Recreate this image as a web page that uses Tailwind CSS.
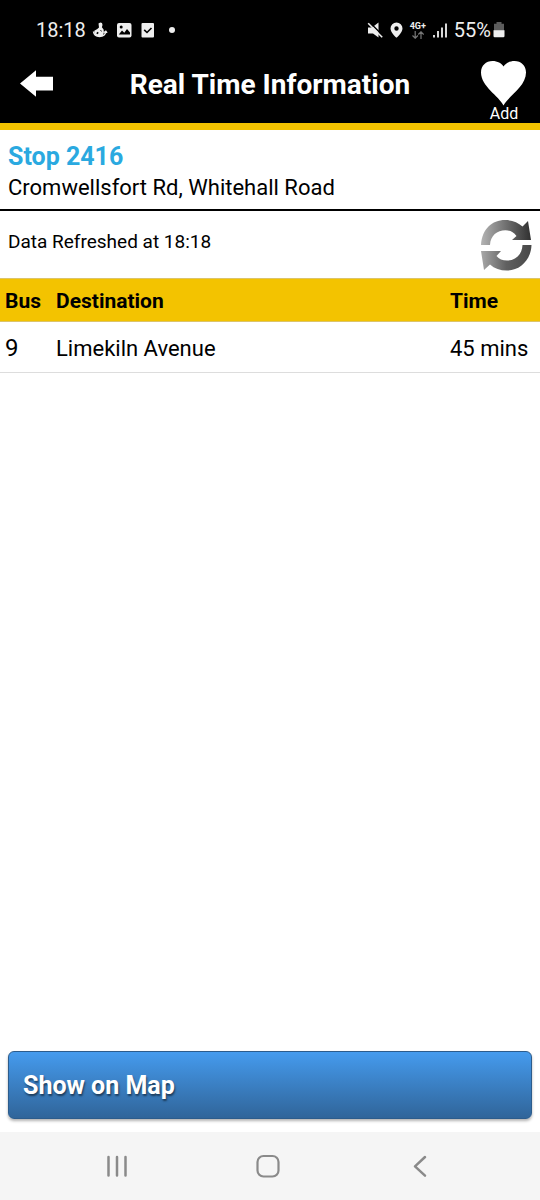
<!DOCTYPE html>
<html lang="en">
<head>
<meta charset="utf-8">
<meta name="viewport" content="width=device-width, initial-scale=1">
<title>Real Time Information</title>
<script src="https://cdn.jsdelivr.net/npm/@tailwindcss/browser@4"></script>
</head>
<body class="flex min-h-screen flex-col bg-white font-['Roboto',sans-serif] text-black">

<!-- Status bar -->
<div class="flex h-15 items-center justify-between bg-black pr-[35px] pl-9 text-[20px] leading-6 text-[#eeeeee]">
  <div class="flex items-center">
    <span>18:18</span>
    <svg class="ml-[6px] h-4 w-4" viewBox="0 0 16 16" fill="none" stroke="currentColor" aria-hidden="true">
      <path d="M6.500 1.500 8.300.5l1.700.6.5 2-.6 2.200 1.700 2.200.3 3-1.200 3.500H4.500L2.300 12V8.700L5.300 7l1.700-1.500z" fill="currentColor" stroke="none"/>
      <path d="M1.500 9.500C2 13 4 14.500 7.500 14.500s5.800-1.500 6.200-5M12 10.500l1.800-1.300 1.200 1.700" stroke-width="1.500"/>
      <path d="m4.200 11.300 1.300-1.500 1.200 1-1 1.500z" fill="#000" stroke="none"/>
      <path d="m8.500 8 1 1.500" stroke="#000" stroke-width=".8"/>
    </svg>
    <svg class="ml-2 h-4 w-4" viewBox="0 0 16 16" aria-hidden="true">
      <rect x="1" y="1" width="14.500" height="14.500" rx="2" fill="currentColor"/>
      <circle cx="5.200" cy="5" r="1.500" fill="#000"/>
      <path d="M2.800 12.500 6 8.500l2.300 2.200L11 7l3 3.500v2z" fill="#000"/>
    </svg>
    <svg class="ml-2 h-4 w-4" viewBox="0 0 16 16" aria-hidden="true">
      <rect x="1.500" y="1" width="12.500" height="14.500" rx="1" fill="currentColor"/>
      <path d="m4.200 7.800 2.800 2.700L11.500 6" fill="none" stroke="#000" stroke-width="1.600"/>
    </svg>
    <svg class="ml-2 h-4 w-4" viewBox="0 0 16 16" aria-hidden="true"><circle cx="8" cy="8" r="3" fill="currentColor"/></svg>
  </div>
  <div class="flex items-center">
    <svg class="h-4 w-4" viewBox="0 0 16 16" aria-hidden="true">
      <path d="M1 5.500h4L11.500.5v15L6 11.500H1z" fill="currentColor"/>
      <path d="M2.800.5 16 13.700" stroke="#000" stroke-width="1.500"/>
      <path d="m1.200 1.200 14 14" stroke="currentColor" stroke-width="1.600"/>
    </svg>
    <svg class="ml-[6px] h-4 w-4" viewBox="0 0 16 16" aria-hidden="true">
      <path fill-rule="evenodd" d="M7.500.5a6 6 0 0 0-6 6c0 4.200 6 9.300 6 9.300s6-5.100 6-9.300a6 6 0 0 0-6-6zm0 3.800a2.200 2.200 0 1 1 0 4.400 2.200 2.200 0 0 1 0-4.400z" fill="currentColor"/>
    </svg>
    <div class="ml-[5px] flex flex-col items-center">
      <span class="text-[9px] leading-[9px] font-bold">4G+</span>
      <svg class="h-2 w-3" viewBox="0 0 12 8" fill="none" stroke="#777" stroke-width="1.200" aria-hidden="true">
        <path d="M3.200 0v7M.5 4.500l2.700 2.700 2.700-2.700M9 8V1M6.300 3.500 9 .8l2.700 2.700"/>
      </svg>
    </div>
    <svg class="ml-[6px] h-4 w-4" viewBox="0 0 16 16" stroke="currentColor" stroke-width="1.800" aria-hidden="true">
      <path d="M2 13v2.500M6 9v6.500M10 5.500v10M14 1.500v14"/>
    </svg>
    <span class="ml-[6px]">55%</span>
    <svg class="ml-[2px] h-4 w-3" viewBox="0 0 12 16" aria-hidden="true">
      <path d="M3.500 0h5v1.800H11V9H1V1.800h2.500z" fill="#5c5c5c"/>
      <path d="M.5 8.300h11v5.700a1.200 1.200 0 0 1-1.200 1.200H1.700A1.200 1.200 0 0 1 .5 14z" fill="currentColor"/>
    </svg>
  </div>
</div>

<!-- Title bar -->
<header class="flex h-[70px] items-start justify-between border-b-[7px] border-[#f3c300] bg-black text-white">
  <button type="button" aria-label="Back" class="flex h-12 w-18 items-center justify-center">
    <svg class="h-7 w-9" viewBox="0 0 36 28" aria-hidden="true"><path d="M2 13.500 18 .3v6.400h17V20.500H18v6.300z" fill="#fff"/></svg>
  </button>
  <h1 class="text-center text-[28px] leading-[50px] font-bold">Real Time Information</h1>
  <button type="button" class="flex w-18 flex-col items-center">
    <svg class="h-[46px] w-12" viewBox="0 0 48 46" aria-hidden="true"><path d="M23.500 45.500C19 36 1 26.500 1 12.500 1 5.500 6 1 12.500 1c5 0 9 2.300 11 5.500C25.500 3.300 29.500 1 34.500 1 41 1 46 5.500 46 12.500 46 26.500 28.500 36 23.500 45.500z" fill="#fff"/></svg>
    <span class="text-[16px] leading-4">Add</span>
  </button>
</header>

<main class="flex grow flex-col">
  <section class="border-b-2 border-black px-2 pt-3 pb-[5px]">
    <h2 class="text-[25px] leading-[30px] font-bold text-[#2aa9e0]">Stop 2416</h2>
    <p class="text-[22px] leading-8">Cromwellsfort Rd, Whitehall Road</p>
  </section>

  <div class="flex h-[67px] items-center justify-between pr-[6px] pl-2">
    <p class="pb-[6px] text-[19px] leading-6">Data Refreshed at 18:18</p>
    <button type="button" aria-label="Refresh">
      <svg class="h-14 w-14" viewBox="0 0 56 56" aria-hidden="true">
        <defs>
          <linearGradient id="top" x1="0" y1="0" x2="1" y2="0"><stop offset="0" stop-color="#b4b4b4"/><stop offset=".5" stop-color="#707070"/><stop offset="1" stop-color="#303030"/></linearGradient>
          <linearGradient id="bottom" x1="0" y1="0" x2="1" y2="0"><stop offset="0" stop-color="#a8a8a8"/><stop offset=".5" stop-color="#606060"/><stop offset="1" stop-color="#484848"/></linearGradient>
        </defs>
        <path d="M3 28C4 12 14 3 27 3c7 0 13 2.500 17.500 6.500L50 4l3 19H34l4.500-4C35.500 14.800 32 13.300 27.500 13.300 19 13.300 12.500 18.500 12 28z" fill="url(#top)"/>
        <path d="M53.500 28C53 43 42 53.500 29 53.500c-7 0-12.500-2-17-6L6 53 3 34h20l-4.500 5c2.500 3 6 4.500 10.500 4.500C38 43.500 44 37.500 44.500 28z" fill="url(#bottom)"/>
      </svg>
    </button>
  </div>

  <table class="w-full table-fixed border-collapse text-left">
    <colgroup><col class="w-14"><col><col class="w-[90px]"></colgroup>
    <thead class="bg-[#f3c300]">
      <tr class="h-[43px] border-y border-[#dcc46a] text-[21px] leading-6">
        <th scope="col" class="pt-[2px] pl-[5px] font-bold">Bus</th>
        <th scope="col" class="pt-[2px] font-bold">Destination</th>
        <th scope="col" class="pt-[2px] font-bold">Time</th>
      </tr>
    </thead>
    <tbody>
      <tr class="h-[51px] border-b border-[#dddddd] text-[22px] leading-6">
        <td class="pt-[2px] pl-[5px] text-[24px]">9</td>
        <td class="pt-1">Limekiln Avenue</td>
        <td class="pt-1">45 mins</td>
      </tr>
    </tbody>
  </table>

  <div class="mt-auto px-2 pb-[13px]">
    <button type="button" class="h-[68px] w-full rounded-md border border-[#2c5c8c] bg-linear-to-b from-[#459bee] to-[#30659a] px-[14px] pt-[2px] text-left text-[25px] leading-8 font-bold text-white shadow-[0_2px_3px_rgba(0,0,0,0.3)] text-shadow-[1px_2px_2px_rgba(0,0,0,0.5)]">Show on Map</button>
  </div>
</main>

<!-- System navigation -->
<nav aria-label="System" class="grid h-[68px] grid-cols-3 items-center justify-items-center bg-[#f5f5f5] pr-11 pl-[41px] text-[#8a8a8a]">
  <button type="button" aria-label="Recent apps">
    <svg class="h-6 w-6" viewBox="0 0 24 24" fill="none" stroke="currentColor" stroke-width="2.500" stroke-linecap="round" aria-hidden="true"><path d="M3.500 3v18.500M12 3v18.500M20.500 3v18.500"/></svg>
  </button>
  <button type="button" aria-label="Home">
    <svg class="h-6 w-6" viewBox="0 0 24 24" fill="none" stroke="currentColor" stroke-width="2.200" aria-hidden="true"><rect x="1.500" y="2" width="21" height="20.500" rx="6"/></svg>
  </button>
  <button type="button" aria-label="Back">
    <svg class="h-6 w-6" viewBox="0 0 24 24" fill="none" stroke="currentColor" stroke-width="2.500" stroke-linecap="round" stroke-linejoin="round" aria-hidden="true"><path d="M17 3 7 12.300l10 9.300"/></svg>
  </button>
</nav>
</body>
</html>
